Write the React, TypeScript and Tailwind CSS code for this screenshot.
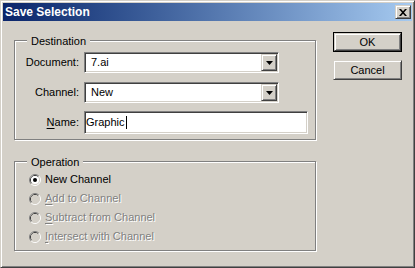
import React from 'react';

const raised =
  'border border-t-[#D4D0C8] border-l-[#D4D0C8] border-r-[#404040] border-b-[#404040] shadow-[inset_1px_1px_0_#fff,inset_-1px_-1px_0_#808080] bg-[#D4D0C8]';
const sunken =
  'border border-t-[#808080] border-l-[#808080] border-r-white border-b-white shadow-[inset_1px_1px_0_#404040,inset_-1px_-1px_0_#D4D0C8] bg-white';
const disabledText = 'text-[#808080] [text-shadow:1px_1px_0_#fff]';

const Radio = ({ checked, disabled }: { checked?: boolean; disabled?: boolean }) => (
  <svg width="12" height="12" viewBox="0 0 12 12" className="shrink-0">
    <path d="M2.11 9.89 A5.5 5.5 0 0 1 9.89 2.11" stroke="#808080" fill="none" />
    <path d="M9.89 2.11 A5.5 5.5 0 0 1 2.11 9.89" stroke="#fff" fill="none" />
    <path d="M2.82 9.18 A4.5 4.5 0 0 1 9.18 2.82" stroke="#404040" fill="none" />
    <path d="M9.18 2.82 A4.5 4.5 0 0 1 2.82 9.18" stroke="#D4D0C8" fill="none" />
    <circle cx="6" cy="6" r="4" fill={disabled ? '#D4D0C8' : '#fff'} />
    {checked && <circle cx="6" cy="6" r="2" fill="#000" />}
  </svg>
);

const Group = ({ title, className, children }: { title: string; className: string; children: React.ReactNode }) => (
  <div className={`relative border border-[#808080] shadow-[inset_1px_1px_0_#fff,1px_1px_0_#fff] ${className}`}>
    <span className="absolute left-[12px] top-[-6px] bg-[#D4D0C8] px-[4px] leading-[13px]">{title}</span>
    {children}
  </div>
);

const Combo = ({ value }: { value: string }) => (
  <div className={`flex h-[21px] w-[195px] p-[1px] ${sunken}`}>
    <span className="flex flex-1 items-center pl-[5px]">{value}</span>
    <div className={`flex h-full w-[16px] items-center justify-center ${raised}`}>
      <svg width="7" height="4" viewBox="0 0 7 4">
        <path d="M0 0h7L3.5 4z" fill="#000" />
      </svg>
    </div>
  </div>
);

const Row = ({ label, children }: { label: React.ReactNode; children: React.ReactNode }) => (
  <div className="flex items-center gap-[5px]">
    <span className="w-[64px] text-right">{label}</span>
    {children}
  </div>
);

const Option = ({ children, checked, disabled }: { children: React.ReactNode; checked?: boolean; disabled?: boolean }) => (
  <div className="flex h-[19px] items-center gap-[4px]">
    <Radio checked={checked} disabled={disabled} />
    <span className={disabled ? disabledText : ''}>{children}</span>
  </div>
);

export default function App() {
  return (
    <div className="h-[268px] w-[415px] border border-t-[#D4D0C8] border-l-[#D4D0C8] border-r-[#404040] border-b-[#404040] bg-[#D4D0C8] p-[2px] font-['Liberation_Sans',Arial,sans-serif] text-[11px] leading-[13px] text-black shadow-[inset_1px_1px_0_#fff,inset_-1px_-1px_0_#808080]">
      {/* title bar */}
      <div className="flex h-[18px] items-center justify-between bg-gradient-to-r from-[#0A246A] to-[#A6CAF0] pl-[2px] pr-[1px]">
        <span className="text-[12px] font-bold text-white">Save Selection</span>
        <div className={`flex h-[14px] w-[16px] items-center justify-center ${raised}`}>
          <svg width="8" height="7" viewBox="0 0 8 7">
            <path d="M0 0h2l2 2.3L6 0h2L5 3.5 8 7H6L4 4.7 2 7H0l3-3.5z" fill="#000" />
          </svg>
        </div>
      </div>

      <div className="flex pl-[11px]">
        <div className="mt-[19px] flex w-[302px] flex-col gap-[21px]">
          <Group title="Destination" className="flex h-[100px] flex-col pt-[11px]">
            <Row label="Document:">
              <Combo value="7.ai" />
            </Row>
            <div className="mt-[9px]">
              <Row label="Channel:">
                <Combo value="New" />
              </Row>
            </div>
            <div className="mt-[8px]">
              <Row label={<><u className="underline-offset-2">N</u>ame:</>}>
                <div className={`flex h-[23px] w-[224px] items-center pl-[1px] ${sunken}`}>
                  Graphic
                  <span className="ml-[1px] h-[13px] w-px bg-black" />
                </div>
              </Row>
            </div>
          </Group>

          <Group title="Operation" className="flex h-[90px] flex-col pl-[14px] pt-[8px]">
            <Option checked>New Channel</Option>
            <Option disabled>
              <u className="underline-offset-2">A</u>dd to Channel
            </Option>
            <Option disabled>
              <u className="underline-offset-2">S</u>ubtract from Channel
            </Option>
            <Option disabled>
              <u className="underline-offset-2">I</u>ntersect with Channel
            </Option>
          </Group>
        </div>

        <div className="ml-[17px] mt-[11px] flex flex-col gap-[8px]">
          <div className="h-[20px] w-[69px] border border-black">
            <div className={`flex h-full w-full items-center justify-center ${raised}`}>OK</div>
          </div>
          <div className={`flex h-[20px] w-[69px] items-center justify-center ${raised}`}>Cancel</div>
        </div>
      </div>
    </div>
  );
}
